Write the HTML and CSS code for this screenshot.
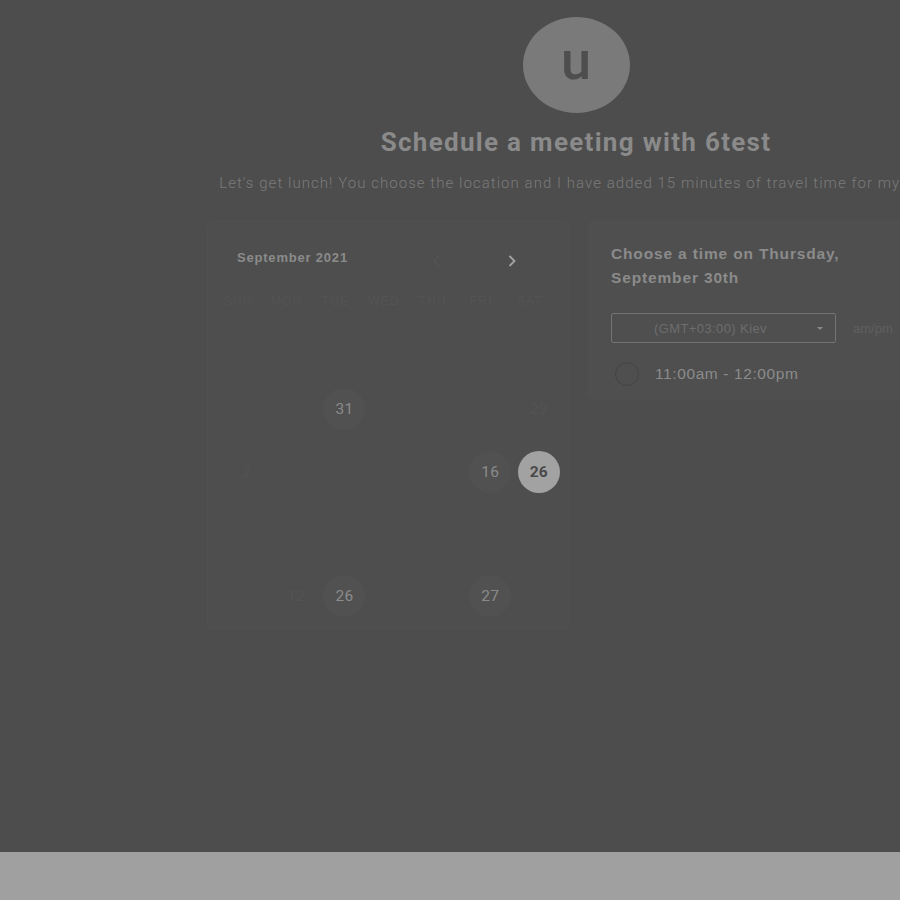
FILE: index.html
```html
<!DOCTYPE html>
<html lang="en">
<head>
<meta charset="utf-8">
<title>Schedule a meeting</title>
<link rel="stylesheet" href="styles.css">
</head>
<body>
<div class="screen">
  <main class="stage">
    <div class="avatar"><span>u</span></div>
    <h1 class="title">Schedule a meeting with 6test</h1>
    <p class="desc">Let's get lunch! You choose the location and I have added 15 minutes of travel time for myself.</p>

    <div class="cards">
      <section class="card calendar">
        <div class="cal-head">
          <span class="month">September 2021</span>
          <div class="nav">
            <svg class="chev prev" width="10" height="14" viewBox="0 0 10 14"><polyline points="7,2 2,7 7,12" fill="none" stroke="#545454" stroke-width="1.6"/></svg>
            <svg class="chev next" width="10" height="14" viewBox="0 0 10 14"><polyline points="2.5,2 7.5,7 2.5,12" fill="none" stroke="#a3a3a3" stroke-width="1.8"/></svg>
          </div>
        </div>
        <div class="weekdays">
          <span>SUN</span><span>MON</span><span>TUE</span><span>WED</span><span>THU</span><span>FRI</span><span>SAT</span>
        </div>
        <div class="days">
          <span></span><span></span><span></span><span></span><span></span><span></span><span></span>
          <span></span><span></span><span class="day avail">31</span><span></span><span></span><span></span><span class="day ghost">29</span>
          <span class="day ghost">2</span><span></span><span></span><span></span><span></span><span class="day avail">16</span><span class="day selected">26</span>
          <span></span><span></span><span></span><span></span><span></span><span></span><span></span>
          <span></span><span class="day ghost">12</span><span class="day avail">26</span><span></span><span></span><span class="day avail">27</span><span></span>
        </div>
      </section>

      <section class="card times">
        <h2 class="choose">Choose a time on Thursday, September 30th</h2>
        <div class="tz-row">
          <div class="select">
            <span class="select-text">(GMT+03:00) Kiev</span>
            <span class="caret"></span>
          </div>
          <span class="ampm">am/pm</span>
        </div>
        <label class="slot">
          <span class="radio"></span>
          <span class="slot-text">11:00am - 12:00pm</span>
        </label>
      </section>
    </div>
  </main>
  <footer class="bar"></footer>
</div>
</body>
</html>
```
FILE: styles.css
```css
html, body {
  margin: 0;
  padding: 0;
  background: #4d4d4d;
  overflow: hidden;
}

.screen {
  width: 900px;
  height: 900px;
  display: flex;
  flex-direction: column;
  overflow: hidden;
}

.stage {
  width: 1152px;
  height: 852px;
  flex: none;
  display: flex;
  flex-direction: column;
  align-items: center;
  background: #4d4d4d;
}

.avatar {
  margin-top: 17px;
  width: 107px;
  height: 96px;
  border-radius: 50%;
  background: #7a7a7a;
  display: flex;
  align-items: center;
  justify-content: center;
}

.avatar span {
  font-family: Roboto, "Liberation Sans", sans-serif;
  font-weight: 500;
  font-size: 54px;
  line-height: 1;
  color: #4e4e4e;
  margin-top: -8px;
}

.title {
  margin: 14px 0 0;
  font-family: Roboto, "Liberation Sans", sans-serif;
  font-weight: 700;
  font-size: 26px;
  line-height: 30px;
  letter-spacing: 1.3px;
  color: #8a8a8a;
}

.desc {
  margin: 16px 0 0;
  font-family: Roboto, "Liberation Sans", sans-serif;
  font-weight: 300;
  font-size: 15px;
  line-height: 20px;
  letter-spacing: 1.05px;
  color: #7b7b7b;
  white-space: nowrap;
}

.cards {
  margin-top: 28px;
  width: 738px;
  display: flex;
  gap: 18px;
  align-items: flex-start;
}

.card {
  background: #4e4e4e;
  border: 1px solid #505050;
  border-radius: 4px;
  box-sizing: border-box;
}

.calendar {
  width: 363px;
  height: 408px;
  padding: 22px 0 0 0;
}

.cal-head {
  display: flex;
  align-items: center;
  height: 26px;
  padding-left: 29px;
}

.month {
  font-family: "Liberation Sans", Arial, sans-serif;
  font-weight: 700;
  font-size: 13px;
  letter-spacing: 0.8px;
  color: #8b8b8b;
}

.nav {
  margin-left: 84px;
  display: flex;
  align-items: center;
  gap: 65px;
  padding-top: 8px;
}

.weekdays {
  margin-top: 23px;
  margin-left: 6px;
  display: grid;
  grid-template-columns: repeat(7, 48.6px);
  font-family: "Liberation Sans", Arial, sans-serif;
  font-size: 12px;
  letter-spacing: 1.2px;
  color: #535353;
  text-align: center;
  line-height: 16px;
}

.days {
  margin-left: 15px;
  margin-top: 7px;
  display: grid;
  grid-template-columns: repeat(7, 48.6px);
  grid-auto-rows: 62.3px;
  align-items: center;
  justify-items: center;
}

.day {
  width: 42px;
  height: 42px;
  border-radius: 50%;
  display: flex;
  align-items: center;
  justify-content: center;
  font-family: Roboto, "Liberation Sans", sans-serif;
  font-size: 15.5px;
  letter-spacing: 0.3px;
}

.avail {
  background: #515151;
  color: #8b8b8b;
}

.ghost {
  color: #535353;
}

.selected {
  background: #a2a2a2;
  color: #4a4a4a;
  font-weight: 700;
}

.times {
  width: 357px;
  height: 178px;
  padding: 20px 0 0 22px;
  background: #4f4f4f;
}

.choose {
  margin: 0;
  width: 260px;
  font-family: "Liberation Sans", Arial, sans-serif;
  font-weight: 700;
  font-size: 15.5px;
  line-height: 24px;
  letter-spacing: 0.85px;
  color: #8b8b8b;
}

.tz-row {
  margin-top: 23px;
  display: flex;
  align-items: center;
  gap: 17px;
}

.select {
  width: 225px;
  height: 30px;
  box-sizing: border-box;
  border: 1px solid #737373;
  border-radius: 2px;
  display: flex;
  align-items: center;
}

.select-text {
  margin-left: 42px;
  font-family: "Liberation Sans", Arial, sans-serif;
  font-size: 13px;
  letter-spacing: 0.4px;
  color: #6d6d6d;
}

.caret {
  margin-left: auto;
  margin-right: 12px;
  width: 0;
  height: 0;
  border-left: 3px solid transparent;
  border-right: 3px solid transparent;
  border-top: 3px solid #8a8a8a;
}

.ampm {
  font-family: "Liberation Sans", Arial, sans-serif;
  font-size: 13px;
  color: #5f5f5f;
}

.slot {
  margin-top: 19px;
  display: flex;
  align-items: center;
  gap: 16px;
  padding-left: 4px;
}

.radio {
  width: 24px;
  height: 24px;
  box-sizing: border-box;
  border-radius: 50%;
  border: 1px solid #444444;
}

.slot-text {
  font-family: "Liberation Sans", Arial, sans-serif;
  font-size: 15.5px;
  letter-spacing: 0.6px;
  color: #8b8b8b;
}

.bar {
  height: 48px;
  flex: none;
  background: #a0a0a0;
}
```
